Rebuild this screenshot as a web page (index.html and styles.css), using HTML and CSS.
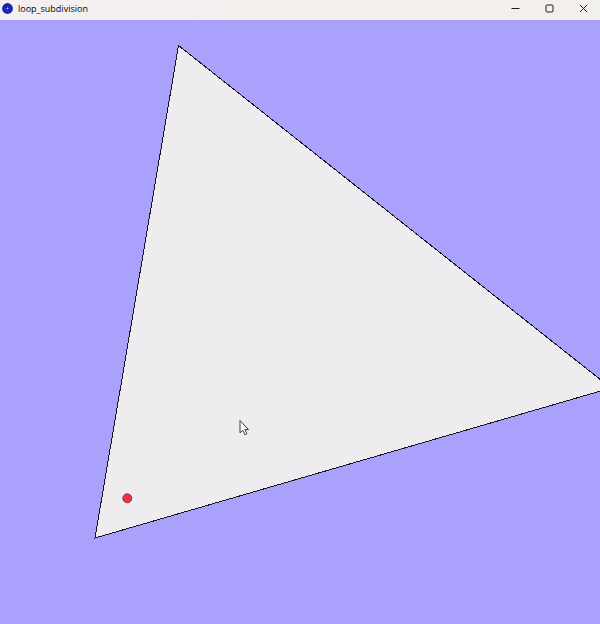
FILE: index.html
```html
<!DOCTYPE html>
<html lang="en">
<head>
<meta charset="utf-8">
<meta name="viewport" content="width=device-width, initial-scale=1">
<title>loop_subdivision</title>
<link rel="stylesheet" href="styles.css">
</head>
<body>
<header class="titlebar">
  <svg class="app-icon" viewBox="0 0 11 11" aria-hidden="true">
    <circle cx="5.5" cy="5.5" r="5.4" fill="#1b24ac"/>
    <path d="M5.5 3.6v3.8M3.6 5.5h3.8" stroke="#3f50cf" stroke-width="1"/>
    <circle cx="5.5" cy="5.5" r=".7" fill="#a9b8ff"/>
  </svg>
  <h1 class="title">loop_subdivision</h1>
  <div class="controls">
    <button class="control" type="button" aria-label="Minimize">
      <svg class="glyph" viewBox="0 0 9 9"><path d="M.5 4.5h8"/></svg>
    </button>
    <button class="control" type="button" aria-label="Maximize">
      <svg class="glyph" viewBox="0 0 9 9"><rect x="1" y="1" width="7" height="7" rx="1"/></svg>
    </button>
    <button class="control" type="button" aria-label="Close">
      <svg class="glyph" viewBox="0 0 9 9"><path d="M1 1l7 7M8 1l-7 7"/></svg>
    </button>
  </div>
</header>
<main class="canvas">
  <svg class="scene" viewBox="0 0 600 604" preserveAspectRatio="xMinYMin slice" role="img" aria-label="Triangle mesh">
    <polygon class="face" points="178.5,25.5 611,368 95,518"/>
    <circle class="vertex" cx="127.3" cy="478.3" r="4.5"/>
    <path class="pointer" d="M240 400.5v12.4l2.8-2.6 2.1 4.4 2-.9-2-4.2h3.6z"/>
  </svg>
</main>
</body>
</html>
```
FILE: styles.css
```css
body {
  margin: 0;
  height: 100vh;
  display: flex;
  flex-direction: column;
  overflow: hidden;
  font-family: "Open Sans", "Noto Sans", sans-serif;
}

.titlebar {
  flex: none;
  height: 20px;
  display: flex;
  align-items: center;
  padding-left: 2px;
  background: linear-gradient(to right, #f5f0ef, #f3eff2 30%, #f4f0eb 42%, #f3f1eb);
  color: #000000;
}

.app-icon {
  width: 11px;
  height: 11px;
  margin: 0 5px 3px 0;
}

.title {
  flex: 1;
  margin: 0 0 2px;
  font-size: 9px;
  line-height: 16px;
  font-weight: 400;
}

.controls {
  display: flex;
}

.control {
  width: 34px;
  height: 20px;
  padding: 0 0 3px;
  border: 0;
  background: none;
  display: flex;
  align-items: center;
  justify-content: center;
}

.glyph {
  width: 9px;
  height: 9px;
  fill: none;
  stroke: #1c1c1c;
  stroke-width: 1;
}

.canvas {
  flex: 1;
  min-height: 0;
  background: #a9a1fb;
}

.scene {
  display: block;
  width: 100%;
  height: 100%;
}

.face {
  fill: #eeecef;
  stroke: #15151c;
  stroke-width: 1;
  shape-rendering: crispEdges;
}

.vertex {
  fill: #ef2f48;
  stroke: #7a3f49;
  stroke-width: 1;
}

.pointer {
  fill: #ffffff;
  stroke: #3a3a3e;
  stroke-width: 1;
}
```
